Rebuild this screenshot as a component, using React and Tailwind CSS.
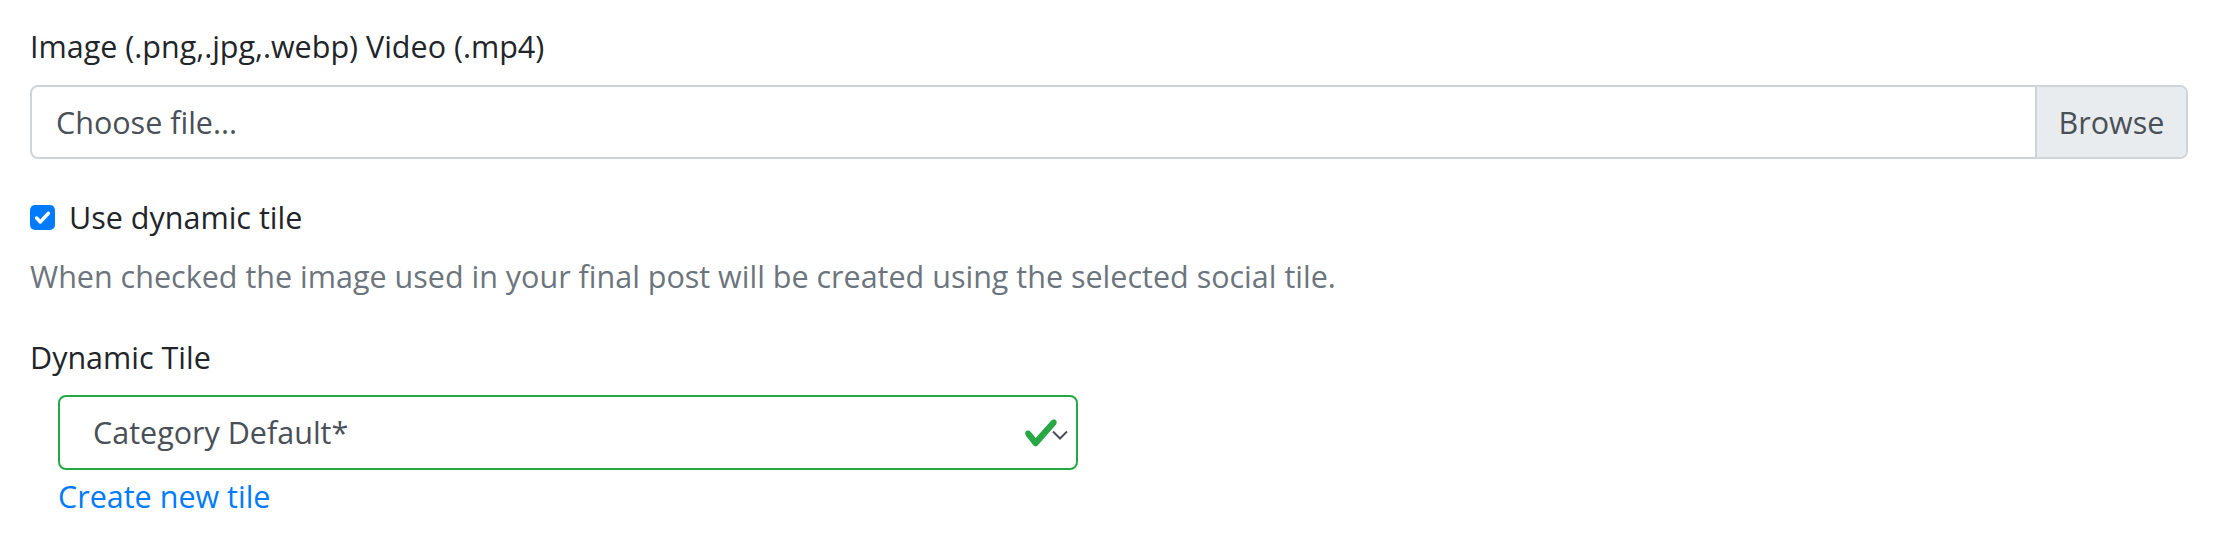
import React from 'react';

const CheckIcon = () => (
  <svg viewBox="0 0 8 8" className="w-[36px] h-[36px]">
    <path
      fill="#28a745"
      d="M2.3 6.73L.6 4.53c-.4-1.04.46-1.4 1.1-.8l1.1 1.4 3.4-3.8c.6-.63 1.6-.27 1.2.7l-4 4.6c-.43.5-.8.4-1.1.1z"
    />
  </svg>
);

const App = () => {
  return (
    <div className="w-[2234px] h-[540px] bg-white pl-[30px] pr-[46px] pt-[24px] font-['Open_Sans',sans-serif] text-[30.5px] leading-[45px] text-[#212529]">
      <label className="block mb-[16px]">Image (.png,.jpg,.webp) Video (.mp4)</label>

      <div className="flex h-[74px] border-2 border-[#ced4da] rounded-[8px] overflow-hidden text-[#495057]">
        <div className="flex-1 flex items-center pl-[24px]">Choose file...</div>
        <div className="w-[151px] flex items-center justify-center bg-[#e9ecef] border-l-2 border-[#ced4da]">
          Browse
        </div>
      </div>

      <div className="mt-[36px] flex items-center gap-[14px]">
        <span className="w-[25px] h-[25px] rounded-[5px] bg-[#007bff] flex items-center justify-center">
          <svg viewBox="0 0 16 16" className="w-[19px] h-[19px]">
            <path d="M3 8.5l3.2 3.2L13 4.5" fill="none" stroke="white" strokeWidth="3" strokeLinecap="round" strokeLinejoin="round" />
          </svg>
        </span>
        <span>Use dynamic tile</span>
      </div>
      <p className="mt-[14px] text-[#6c757d]">
        When checked the image used in your final post will be created using the selected social tile.
      </p>

      <label className="block mt-[36px]">Dynamic Tile</label>
      <div className="ml-[28px] mt-[15px] w-[1020px]">
        <div className="relative flex items-center h-[75px] border-2 border-[#28a745] rounded-[8px] pl-[33px] text-[#495057]">
          <span>Category Default*</span>
          <div className="absolute right-[8px] top-1/2 -translate-y-1/2 flex items-center">
            <CheckIcon />
            <svg viewBox="0 0 16 10" className="w-[16px] h-[10px] -ml-[7px] mt-[4px]">
              <path d="M1 1.5l7 7 7-7" fill="none" stroke="#4b4f58" strokeWidth="2" />
            </svg>
          </div>
        </div>
        <a href="#" className="block text-[#007bff] leading-[45px] mt-[4px]">Create new tile</a>
      </div>
    </div>
  );
};

export default App;
